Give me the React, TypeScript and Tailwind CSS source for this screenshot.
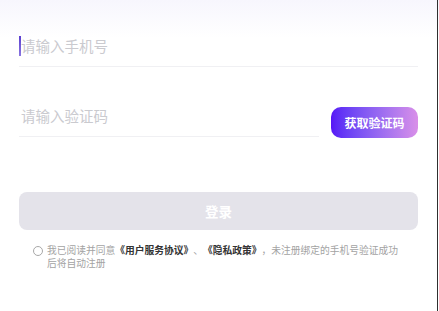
import React, { useState } from 'react';

const font = { fontFamily: '"Noto Sans CJK SC", "Noto Sans", sans-serif' };

export default function App() {
  const [phone, setPhone] = useState('');
  const [code, setCode] = useState('');
  const [agreed, setAgreed] = useState(false);

  return (
    <div
      className="flex min-h-[311px] w-full bg-[linear-gradient(to_bottom,#f7f6fd_0px,#ffffff_38px)] [text-spacing-trim:space-all]"
      style={font}
    >
      <div className="flex-1 px-[19px] pt-[26px]">
        {/* 手机号 */}
        <div className="flex h-[41px] items-center border-b border-[#f0f0f3]">
          <span className="h-[20px] w-[2px] shrink-0 bg-[linear-gradient(to_bottom,#5b3fd0,#8a76e0)]" />
          <input
            value={phone}
            onChange={e => setPhone(e.target.value)}
            placeholder="请输入手机号"
            className="flex-1 bg-transparent text-[14.5px] text-[#333] outline-none placeholder:text-[#cacacf]"
          />
        </div>

        {/* 验证码 */}
        <div className="mt-[29px] flex items-end gap-[12px]">
          <div className="flex h-[41px] flex-1 items-center border-b border-[#f0f0f3]">
            <input
              value={code}
              onChange={e => setCode(e.target.value)}
              placeholder="请输入验证码"
              className="ml-[2px] flex-1 bg-transparent text-[14.5px] text-[#333] outline-none placeholder:text-[#cacacf]"
            />
          </div>
          <button className="mb-[-1px] h-[31px] w-[87px] rounded-[10px] bg-linear-to-r from-[#5714f6] to-[#d98fe8] text-[12px] font-bold text-white">
            获取验证码
          </button>
        </div>

        {/* 登录 */}
        <button className="mt-[55px] flex h-[38px] w-full items-center justify-center rounded-[8px] bg-[#e4e3ea] text-[13.5px] font-bold text-white">
          登录
        </button>

        {/* 协议 */}
        <div className="mt-[14px] flex items-start gap-[4px] px-[14px]">
          <button
            onClick={() => setAgreed(!agreed)}
            className={`mt-[2px] h-[10px] w-[10px] shrink-0 rounded-full border ${agreed ? 'border-[#6a3cf0] bg-[#6a3cf0]' : 'border-[#a8a8a8]'}`}
          />
          <p className="text-[9.75px] leading-[13px] text-[#a3a3a3] [text-spacing-trim:space-all]">
            我已阅读并同意<span className="font-bold text-[#333]">《用户服务协议》</span>、<span className="font-bold text-[#333]">《隐私政策》</span>，未注册绑定的手机号验证成功后将自动注册
          </p>
        </div>
      </div>
      <div className="w-px bg-[#2f2f2f]" />
      <div className="w-px" />
    </div>
  );
}
